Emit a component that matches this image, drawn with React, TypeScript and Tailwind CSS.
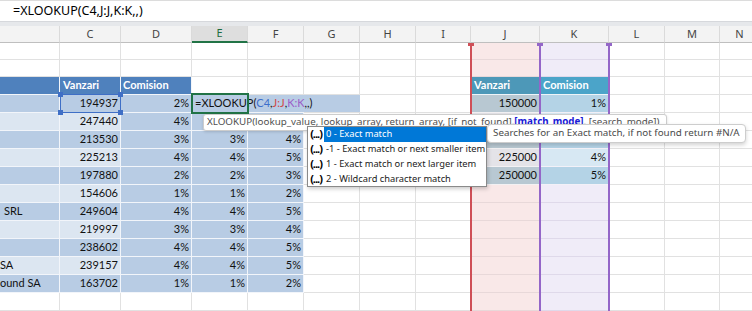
import React from 'react';

const W = [
  'w-[60px]', 'w-[61px]', 'w-[71px]', 'w-[56px]', 'w-[56px]', 'w-[56px]', 'w-[56px]',
  'w-[55px]', 'w-[69px]', 'w-[69px]', 'w-[56px]', 'w-[55px]', 'w-[40px]',
];
const LETTERS = ['', 'C', 'D', 'E', 'F', 'G', 'H', 'I', 'J', 'K', 'L', 'M', 'N'];

const DARK = 'bg-[#b8cce4]';
const LIGHT = 'bg-[#dce6f1]';
const HEAD = 'bg-[#4f81bd]';
const PINK = 'bg-[#f9e8e8]';
const LAV = 'bg-[#f0ecf8]';
const GRID = 'border-[#e1e1e1]';
const TGRID = 'border-[#f2f5fa]';
const PGRID = 'border-[#e8d8d9]';
const LGRID = 'border-[#dfd9ea]';

type Cell = { t?: React.ReactNode; r?: boolean; bg: string; bd: string; cls?: string };

const C = [194937, 247440, 213530, 225213, 197880, 154606, 249604, 219997, 238602, 239157, 163702];
const D = [2, 4, 3, 4, 2, 1, 4, 3, 4, 4, 1];
const E = [2, 4, 3, 4, 2, 1, 4, 3, 4, 4, 1];
const F = [3, 5, 4, 5, 3, 2, 5, 4, 5, 5, 2];
const J = [150000, 175000, 200000, 225000, 250000];
const K = [1, 2, 3, 4, 5];

const B_TEXT: Record<number, React.ReactNode> = {
  10: <span className="pl-[4px]">SRL</span>,
  13: <span>SA</span>,
  14: <span>ound SA</span>,
};

function buildRow(r: number): Cell[] {
  const w: Cell = { bg: 'bg-white', bd: GRID };
  const cells: Cell[] = [];
  const inTable = r >= 4 && r <= 14;
  const band = r % 2 === 0 ? DARK : LIGHT;
  const i = r - 4;
  // B
  if (r === 3) cells.push({ bg: HEAD, bd: TGRID });
  else if (inTable) cells.push({ bg: band, bd: TGRID, t: B_TEXT[r] });
  else cells.push(w);
  // C
  if (r === 3) cells.push({ bg: HEAD, bd: TGRID, t: 'Vanzari', cls: 'text-white font-bold pl-[3px]' });
  else if (inTable) cells.push({ bg: band, bd: TGRID, t: String(C[i]), r: true });
  else cells.push(w);
  // D
  if (r === 3) cells.push({ bg: HEAD, bd: TGRID, t: 'Comision', cls: 'text-white font-bold pl-[2px]' });
  else if (inTable) cells.push({ bg: DARK, bd: TGRID, t: `${D[i]}%`, r: true });
  else cells.push(w);
  // E
  if (inTable) cells.push({ bg: DARK, bd: TGRID, t: r >= 6 ? `${E[i]}%` : '', r: true });
  else cells.push(w);
  // F
  if (inTable) cells.push({ bg: DARK, bd: TGRID, t: r >= 6 ? `${F[i]}%` : '', r: true });
  else cells.push(w);
  // G H I
  cells.push(w, w, w);
  // J
  if (r === 3) cells.push({ bg: 'bg-[#4d98b8]', bd: 'border-[#eef4f8]', t: 'Vanzari', cls: 'text-white font-bold pl-[3px]' });
  else if (r >= 4 && r <= 8)
    cells.push({ bg: r % 2 === 0 ? 'bg-[#b8c8d2]' : 'bg-[#e4e3e8]', bd: 'border-[#f3f1f3]', t: String(J[r - 4]), r: true });
  else cells.push({ bg: PINK, bd: PGRID });
  // K
  if (r === 3) cells.push({ bg: 'bg-[#4ba4c9]', bd: 'border-[#eef4f8]', t: 'Comision', cls: 'text-white font-bold pl-[3px]' });
  else if (r >= 4 && r <= 8)
    cells.push({ bg: r % 2 === 0 ? 'bg-[#b4d3e6]' : 'bg-[#d7e8f3]', bd: 'border-[#f3f1f8]', t: `${K[r - 4]}%`, r: true });
  else cells.push({ bg: LAV, bd: LGRID });
  // L M N
  cells.push(w, w, w);
  return cells;
}

const ROWS = Array.from({ length: 15 }, (_, k) => k + 1);

function Handle({ cls }: { cls: string }) {
  return <div className={`absolute w-[5px] h-[5px] bg-[#3f6fc6] ${cls}`} />;
}

export default function App() {
  return (
    <div className="relative w-[752px] h-[311px] overflow-hidden bg-white font-['Lato',sans-serif] text-[11px] text-[#111]">
      {/* formula bar */}
      <div className="h-[21px] border-t border-[#dcdcdc] bg-white flex items-center pl-[13px] font-['Noto_Sans',sans-serif] text-[12.5px] text-black">
        =XLOOKUP(C4,J:J,K:K,,)
      </div>
      <div className="h-[5px] bg-[#e6e8eb] border-t border-[#d6d8dc]" />
      {/* column headers */}
      <div className="flex h-[17px] bg-[#f3f3f3] font-['Noto_Sans',sans-serif] text-[11px] text-[#444]">
        {LETTERS.map((l, i) => (
          <div
            key={i}
            className={`${W[i]} shrink-0 flex items-center justify-center border-r border-[#dadada] ${
              l === 'E'
                ? 'bg-[#dedede] border-b-2 border-b-[#217346] text-[#1d6b40]'
                : 'border-b border-b-[#bfbfbf]'
            }`}
          >
            {l}
          </div>
        ))}
      </div>
      {/* grid rows */}
      {ROWS.map((r) => (
        <div key={r} className={`flex ${r <= 2 ? 'h-[17px]' : 'h-[18px]'}`}>
          {buildRow(r).map((c, i) => (
            <div
              key={i}
              className={`${W[i]} shrink-0 border-r border-b ${c.bd} ${c.bg} flex items-center overflow-hidden whitespace-nowrap ${
                c.r ? 'justify-end pr-[2px]' : ''
              } ${c.cls ?? ''}`}
            >
              {c.t}
            </div>
          ))}
        </div>
      ))}

      {/* range highlight lines J:J (red) and K:K (purple) */}
      <div className="absolute left-[470px] top-[43px] bottom-0 w-[2px] bg-[#cf4f57]" />
      <div className="absolute left-[468px] top-[43px] w-[6px] h-[3px] bg-[#cf4f57]" />
      <div className="absolute left-[539px] top-[43px] bottom-0 w-[2px] bg-[#9466c8]" />
      <div className="absolute left-[537px] top-[43px] w-[6px] h-[3px] bg-[#9466c8]" />
      <div className="absolute left-[608px] top-[43px] bottom-0 w-[2px] bg-[#9466c8]" />
      <div className="absolute left-[606px] top-[43px] w-[6px] h-[3px] bg-[#9466c8]" />

      {/* C4 reference highlight */}
      <div className="absolute left-[60px] top-[94px] w-[61px] h-[19px] border border-[#3f6fc6]">
        <Handle cls="-left-[3px] -top-[3px]" />
        <Handle cls="-right-[3px] -top-[3px]" />
        <Handle cls="-left-[3px] -bottom-[3px]" />
        <Handle cls="-right-[3px] -bottom-[3px]" />
      </div>

      {/* in-cell edit E4 */}
      <div className="absolute left-[193px] top-[95px] w-[167px] h-[17px] bg-[#b8cce4] flex items-center pl-[2px] whitespace-nowrap">
        <span>=XLOOKUP(</span>
        <span className="text-[#3d6fcb]">C4</span>
        <span>,</span>
        <span className="text-[#d24848]">J:J</span>
        <span>,</span>
        <span className="text-[#9a5cc8]">K:K</span>
        <span>,,)</span>
      </div>
      <div className="absolute left-[191px] top-[93px] w-[58px] h-[21px] border-2 border-[#217346]" />

      {/* function signature tooltip */}
      <div className="absolute left-[203px] top-[114px] w-[464px] h-[17px] bg-white border border-[#cdcdcd] rounded-[3px] shadow-[0_1px_3px_rgba(0,0,0,0.15)] flex items-center pl-[3px] whitespace-nowrap font-['Noto_Sans',sans-serif] text-[9.8px] text-[#505050]">
        <span>XLOOKUP(lookup_value, lookup_array, return_array, [if_not_found], </span>
        <span className="font-bold text-[#1a1ad6]">[match_mode]</span>
        <span>, [search_mode])</span>
      </div>

      {/* autocomplete list */}
      <div className="absolute left-[307px] top-[126px] w-[180px] h-[61px] bg-white border border-[#8a8a8a] shadow-[1px_2px_4px_rgba(0,0,0,0.2)] flex flex-col font-['Noto_Sans',sans-serif] text-[9.3px] text-[#1a1a1a]">
        {[
          '0 - Exact match',
          '-1 - Exact match or next smaller item',
          '1 - Exact match or next larger item',
          '2 - Wildcard character match',
        ].map((t, i) => (
          <div key={i} className="h-[15px] flex items-stretch">
            <div className="w-[16px] shrink-0 flex items-center justify-center font-bold text-[11px] tracking-[-1px] text-black leading-none pb-[1px]">
              (...)
            </div>
            <div className={`flex-1 flex items-center pl-[2px] whitespace-nowrap ${i === 0 ? 'bg-[#0078d7] text-white' : ''}`}>
              {t}
            </div>
          </div>
        ))}
      </div>

      {/* description tooltip */}
      <div className="absolute left-[487px] top-[124px] w-[259px] h-[19px] bg-white border border-[#cdcdcd] rounded-[4px] shadow-[0_2px_4px_rgba(0,0,0,0.18)] flex items-center pl-[5px] whitespace-nowrap font-['Noto_Sans',sans-serif] text-[9.8px] text-[#4a4a4a]">
        Searches for an Exact match, if not found return #N/A
      </div>
    </div>
  );
}
